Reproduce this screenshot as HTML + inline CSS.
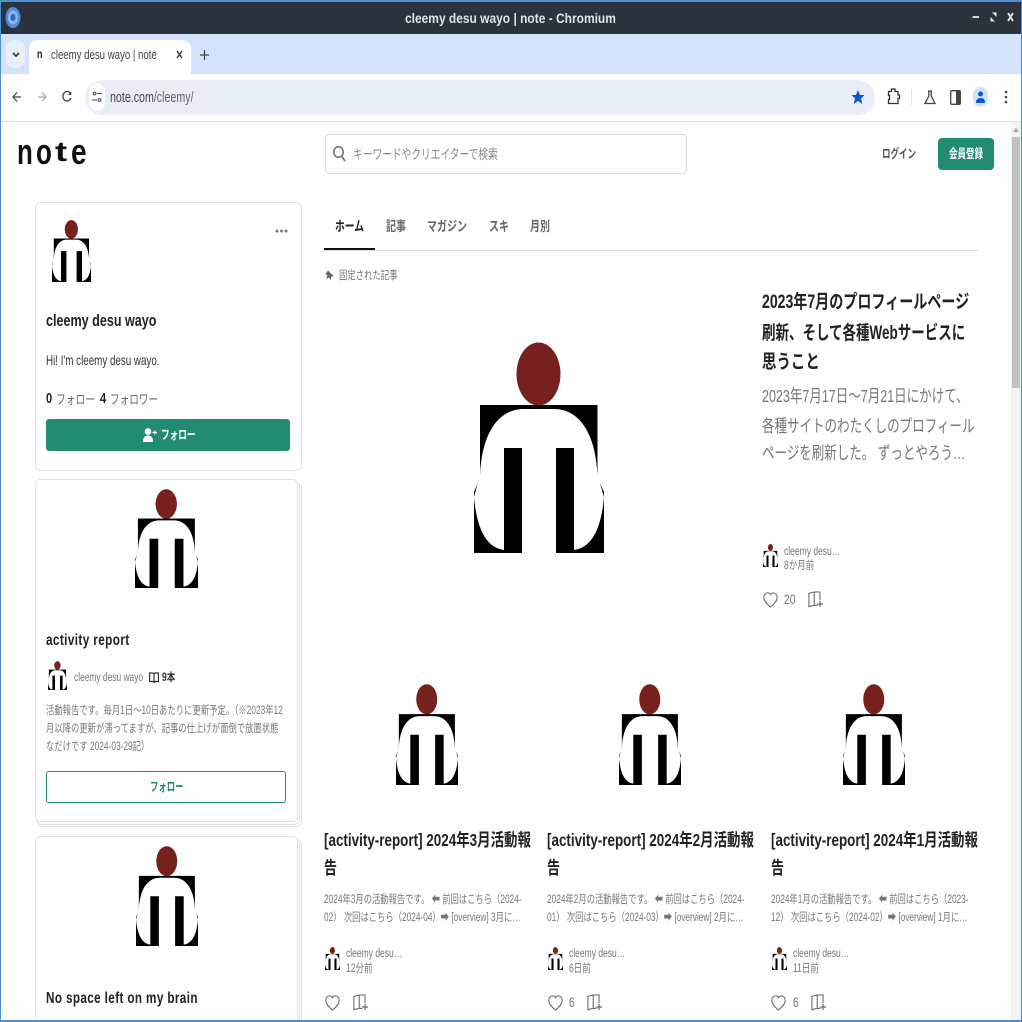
<!DOCTYPE html>
<html lang="ja"><head><meta charset="utf-8"><title>cleemy desu wayo | note - Chromium</title>
<style>
*{box-sizing:border-box}
html,body{margin:0;padding:0;width:1022px;height:1022px;overflow:hidden;background:#fff}
body{position:relative;font-family:"Liberation Sans","Noto Sans CJK JP",sans-serif;color:#222}
.a{position:absolute}
.t{position:absolute;white-space:nowrap;transform-origin:0 0;transform:scaleX(.74);line-height:1}
.b{font-weight:700}
.g{color:#777}
svg{position:absolute;overflow:visible}
.card{position:absolute;background:#fff;border:1px solid #e2e2e2;border-radius:6px}
</style></head><body>
<svg width="0" height="0" style="position:absolute"><defs>
<symbol id="m" viewBox="0 0 130 211" preserveAspectRatio="none">
<ellipse cx="64.5" cy="32" rx="22" ry="31.5" fill="#76211e"/>
<path d="M6 63H123.5V136L130 150V211H0V150L6 136Z" fill="#000"/>
<path d="M6 133C8 90 25 67 50 67H80C104.500 67 121.500 90 123.500 133L130 155C127 190 116 206 100 208V106H82V211H48V106H30V208C14 206 3 190 0 155Z" fill="#fff"/>
</symbol>
<symbol id="h" viewBox="0 0 18 20"><path d="M9 18.500C3 13.500 1 10.500 1 7C1 3.500 3.200 1.500 5.600 1.500C7 1.500 8.300 2.300 9 3.800C9.700 2.300 11 1.500 12.400 1.500C14.800 1.500 17 3.500 17 7C17 10.500 15 13.500 9 18.500Z" fill="none" stroke="#666" stroke-width="1.200"/></symbol>
<symbol id="k" viewBox="0 0 18 20"><path d="M1 2.500L7 1V16L1 17.500ZM7 1H13.500V10M7 16H11" fill="none" stroke="#666" stroke-width="1.200"/><path d="M13.500 11V18M10.500 14.500H17" fill="none" stroke="#666" stroke-width="1.300"/></symbol>
</defs></svg>

<!-- title bar -->
<div class="a" style="left:0;top:0;width:1022px;height:34px;background:#2c323e"></div>
<div class="a" style="left:0;top:0;width:1022px;height:2px;background:#4a90d9"></div>
<div class="t b" style="left:405px;top:11px;font-size:14px;color:#dfe2e8;transform:scaleX(.855)">cleemy desu wayo | note - Chromium</div>
<svg style="left:5px;top:7px" width="16" height="21" viewBox="0 0 16 21"><ellipse cx="8" cy="10.500" rx="7.500" ry="10.500" fill="#4d8ae0"/><ellipse cx="8" cy="10.500" rx="5" ry="7" fill="#8fb6ec"/><ellipse cx="8" cy="10.500" rx="2.600" ry="3.600" fill="#2a66c4"/></svg>
<svg style="left:970px;top:10px" width="46" height="14" viewBox="0 0 46 14" fill="none" stroke="#e6e6e6"><path d="M2.500 7H9" stroke-width="1.800"/><path d="M20.500 7V11.500H25Z" fill="#e6e6e6" stroke="none"/><path d="M26.500 2.500V7L22 2.500Z" fill="#e6e6e6" stroke="none"/><path d="M38 3L43 11M43 3L38 11" stroke-width="1.800"/></svg>

<!-- tab strip -->
<div class="a" style="left:0;top:34px;width:1022px;height:40px;background:#d3e3fd"></div>
<div class="a" style="left:6px;top:40px;width:19px;height:28px;background:#e9f0fb;border-radius:8px"></div>
<svg style="left:12px;top:52px" width="8" height="6" viewBox="0 0 8 6"><path d="M1 1L4 4L7 1" fill="none" stroke="#333" stroke-width="1.600"/></svg>
<div class="a" style="left:29px;top:40px;width:162px;height:36px;background:#fff;border-radius:9px 9px 0 0"></div>
<div class="t b" style="left:37px;top:48px;font-size:12px;color:#222">n</div>
<div class="t" style="left:51px;top:49px;font-size:12.500px;color:#444;transform:scaleX(.77)">cleemy desu wayo | note</div>
<svg style="left:176px;top:50px" width="7" height="9" viewBox="0 0 7 9"><path d="M1 1L6 8M6 1L1 8" stroke="#333" stroke-width="1.400"/></svg>
<svg style="left:200px;top:50px" width="9" height="10" viewBox="0 0 9 10"><path d="M4.500 0V10M0 5H9" stroke="#444" stroke-width="1.200"/></svg>

<!-- toolbar -->
<div class="a" style="left:0;top:74px;width:1022px;height:48px;background:#fff;border-bottom:1px solid #dedede;border-radius:8px 8px 0 0"></div>
<svg style="left:12px;top:91px" width="10" height="12" viewBox="0 0 10 12"><path d="M9 6H1M5 1.500L1 6L5 10.500" fill="none" stroke="#444" stroke-width="1.300"/></svg>
<svg style="left:37px;top:91px" width="10" height="12" viewBox="0 0 10 12"><path d="M1 6H9M5 1.500L9 6L5 10.500" fill="none" stroke="#aaa" stroke-width="1.300"/></svg>
<svg style="left:62px;top:90px" width="10" height="13" viewBox="0 0 10 13"><path d="M8.800 4A4.200 4.800 0 1 0 9 8" fill="none" stroke="#444" stroke-width="1.300"/><path d="M9.300 1.500V5H5.800Z" fill="#444"/></svg>
<div class="a" style="left:85px;top:80px;width:790px;height:35px;background:#e9eef6;border-radius:18px"></div>
<div class="a" style="left:89px;top:83px;width:16px;height:28px;background:#fff;border-radius:8px"></div>
<svg style="left:92px;top:91px" width="10" height="12" viewBox="0 0 10 12"><circle cx="2.500" cy="2.500" r="1.400" fill="none" stroke="#444"/><path d="M5 2.500H10M0 9H5" stroke="#444"/><circle cx="7.500" cy="9" r="1.400" fill="none" stroke="#444"/></svg>
<div class="t" style="left:110px;top:91px;font-size:14.500px;color:#444;transform:scaleX(.735)">note.com<span style="color:#666">/cleemy/</span></div>
<svg style="left:851px;top:89px" width="14" height="16" viewBox="0 0 14 16"><path d="M7 1L9 6H13.500L10 9.500L11.300 15L7 12L2.700 15L4 9.500L.5 6H5Z" fill="#0b57d0"/></svg>
<svg style="left:887px;top:88px" width="13" height="17" viewBox="0 0 13 17"><path d="M2 3.500H4.500V1H8V3.500H11V7H12.500V10.500H11V15.500H1.500V11.500H2.500V7.500H1.500V3.500Z" fill="none" stroke="#333" stroke-width="1.300"/></svg>
<div class="a" style="left:911px;top:89px;width:1px;height:16px;background:#d3e3fd"></div>
<svg style="left:924px;top:90px" width="12" height="15" viewBox="0 0 12 15"><path d="M4 1H8M4.800 1V6L1 13.500H11L7.200 6V1" fill="none" stroke="#444" stroke-width="1.300"/></svg>
<svg style="left:950px;top:90px" width="11" height="15" viewBox="0 0 11 15"><rect x=".7" y=".7" width="9.600" height="13.600" rx="1" fill="none" stroke="#444" stroke-width="1.300"/><rect x="6" y="1" width="4" height="13" fill="#444"/></svg>
<div class="a" style="left:973px;top:87px;width:15px;height:20px;background:#d3e3fd;border-radius:8px"></div>
<svg style="left:976px;top:91px" width="9" height="12" viewBox="0 0 9 12"><circle cx="4.500" cy="3" r="2.500" fill="#0b57d0"/><path d="M0 12C0 8 2 7 4.500 7S9 8 9 12Z" fill="#0b57d0"/></svg>
<svg style="left:1004px;top:90px" width="4" height="14" viewBox="0 0 4 14" fill="#444"><circle cx="2" cy="2" r="1.300"/><circle cx="2" cy="7" r="1.300"/><circle cx="2" cy="12" r="1.300"/></svg>

<!-- scrollbar -->
<div class="a" style="left:1011px;top:122px;width:10px;height:898px;background:#f3f3f3"></div>
<div class="a" style="left:1012px;top:137px;width:8px;height:251px;background:#c1c1c1"></div>
<svg style="left:1012px;top:127px" width="8" height="6" viewBox="0 0 8 6"><path d="M4 1L7 5H1Z" fill="#a3a3a3"/></svg>

<!-- header -->
<div class="t b" style="left:17px;top:134px;font-size:36px;color:#111;transform:scaleX(.72)">n</div>
<div class="t b" style="left:36px;top:134px;font-size:36px;color:#111;transform:scaleX(.72)">o</div>
<div class="t b" style="left:55px;top:138px;font-size:28px;color:#111;transform:scaleX(1.3)">t</div>
<div class="t b" style="left:71px;top:134px;font-size:36px;color:#111;transform:scaleX(.78)">e</div>
<div class="a" style="left:325px;top:134px;width:362px;height:40px;border:1px solid #ddd;border-radius:4px"></div>
<svg style="left:333px;top:146px" width="13" height="16" viewBox="0 0 13 16"><ellipse cx="5.500" cy="6" rx="4.700" ry="5.300" fill="none" stroke="#777" stroke-width="1.600"/><path d="M8.500 10L12 15" stroke="#777" stroke-width="1.700"/></svg>
<div class="t g" style="left:353px;top:148px;font-size:13.500px;color:#888;transform:scaleX(.72)">キーワードやクリエイターで検索</div>
<div class="t b" style="left:882px;top:148px;font-size:12.500px;color:#555;transform:scaleX(.68)">ログイン</div>
<div class="a" style="left:938px;top:138px;width:56px;height:32px;background:#228c73;border-radius:4px"></div>
<div class="t b" style="left:949px;top:148px;font-size:12.500px;color:#fff;transform:scaleX(.68)">会員登録</div>

<!-- profile card -->
<div class="card" style="left:35px;top:202px;width:267px;height:269px"></div>
<svg style="left:52px;top:219.500px" width="39" height="62"><use href="#m" width="39" height="62"/></svg>
<svg style="left:275px;top:229px" width="13" height="4" fill="#777"><circle cx="2" cy="2" r="1.500"/><circle cx="6.500" cy="2" r="1.500"/><circle cx="11" cy="2" r="1.500"/></svg>
<div class="t b" style="left:46px;top:312px;font-size:17px;color:#222;transform:scaleX(.74)">cleemy desu wayo</div>
<div class="t" style="left:46px;top:353px;font-size:14px;color:#333;transform:scaleX(.7)">Hi! I'm cleemy desu wayo.</div>
<div class="t b" style="left:46px;top:391px;font-size:15px;color:#222">0</div>
<div class="t" style="left:56px;top:393px;font-size:13px;color:#666;transform:scaleX(.75)">フォロー</div>
<div class="t b" style="left:100px;top:391px;font-size:15px;color:#222">4</div>
<div class="t" style="left:110px;top:393px;font-size:13px;color:#666">フォロワー</div>
<div class="a" style="left:46px;top:419px;width:244px;height:32px;background:#228c73;border-radius:3px"></div>
<svg style="left:143px;top:428px" width="14" height="14" viewBox="0 0 14 14" fill="#fff"><circle cx="5" cy="3.500" r="3.300"/><path d="M0 14C0 9 2 7.500 5 7.500S10 9 10 14Z"/><path d="M9.500 4.500H14M11.800 2.500V6.500" stroke="#fff" stroke-width="1.200"/></svg>
<div class="t b" style="left:161px;top:429px;font-size:12.500px;color:#fff;transform:scaleX(.69)">フォロー</div>

<!-- magazine card 1 -->
<div class="card" style="left:38px;top:483px;width:264px;height:344px;border-radius:5px"></div>
<div class="card" style="left:36px;top:481px;width:264px;height:344px;border-radius:5px"></div>
<div class="card" style="left:35px;top:479px;width:263px;height:343px;border-radius:5px"></div>
<svg style="left:135px;top:489px" width="63" height="99"><use href="#m" width="63" height="99"/></svg>
<div class="t b" style="left:46px;top:633px;font-size:15.500px;color:#222;letter-spacing:.5px;transform:scaleX(.76)">activity report</div>
<svg style="left:48px;top:661px" width="19" height="29"><use href="#m" width="19" height="29"/></svg>
<div class="t" style="left:74px;top:673px;font-size:11.500px;color:#777;transform:scaleX(.73)">cleemy desu wayo</div>
<svg style="left:149px;top:672px" width="10" height="11" viewBox="0 0 10 11"><path d="M.6 1H4L5 2L6 1H9.400V9.500H6L5 10.500L4 9.500H.6ZM5 2V10.500" fill="none" stroke="#333" stroke-width="1.200"/></svg>
<div class="t b" style="left:162px;top:673px;font-size:11.500px;color:#333">9本</div>
<div class="t" style="left:46px;top:706px;font-size:11.500px;color:#777;transform:scaleX(.725)">活動報告です。毎月1日～10日あたりに更新予定。（※2023年12</div>
<div class="t" style="left:46px;top:724px;font-size:11.500px;color:#777;transform:scaleX(.725)">月以降の更新が滞ってますが、記事の仕上げが面倒で放置状態</div>
<div class="t" style="left:46px;top:742px;font-size:11.500px;color:#777;transform:scaleX(.725)">なだけです 2024-03-29記）</div>
<div class="a" style="left:46px;top:771px;width:240px;height:32px;border:1px solid #228c73;border-radius:3px"></div>
<div class="t b" style="left:150px;top:781px;font-size:12.500px;color:#228c73;transform:scaleX(.67)">フォロー</div>

<!-- magazine card 2 -->
<div class="card" style="left:39px;top:840px;width:263px;height:200px;border-radius:5px"></div>
<div class="card" style="left:37px;top:838px;width:263px;height:200px;border-radius:5px"></div>
<div class="card" style="left:35px;top:836px;width:263px;height:200px;border-radius:5px"></div>
<svg style="left:136px;top:846px" width="62" height="100"><use href="#m" width="62" height="100"/></svg>
<div class="t b" style="left:46px;top:991px;font-size:15.500px;color:#222;letter-spacing:.5px;transform:scaleX(.755)">No space left on my brain</div>

<!-- tabs -->
<div class="t b" style="left:335px;top:220px;font-size:13.500px;color:#222;transform:scaleX(.725)">ホーム</div>
<div class="t b" style="left:386px;top:220px;font-size:13.500px;color:#666">記事</div>
<div class="t b" style="left:427px;top:220px;font-size:13.500px;color:#666">マガジン</div>
<div class="t b" style="left:489px;top:220px;font-size:13.500px;color:#666">スキ</div>
<div class="t b" style="left:530px;top:220px;font-size:13.500px;color:#666">月別</div>
<div class="a" style="left:324px;top:250px;width:654px;height:1px;background:#ddd"></div>
<div class="a" style="left:324px;top:248px;width:51px;height:2px;background:#111"></div>
<svg style="left:325px;top:270px" width="9" height="11" viewBox="0 0 9 11"><path d="M3 .5L8.500 6L6 7V10.500L4 7.500L1 9L2.500 5.500L.5 4Z" fill="#666"/></svg>
<div class="t" style="left:339px;top:271px;font-size:11.500px;color:#777;transform:scaleX(.727)">固定された記事</div>

<!-- pinned -->
<svg style="left:474px;top:342px" width="130" height="211"><use href="#m" width="130" height="211"/></svg>
<div class="t b" style="left:762px;top:293px;font-size:19px;color:#222">2023年7月のプロフィールページ</div>
<div class="t b" style="left:762px;top:324px;font-size:19px;color:#222;transform:scaleX(.71)">刷新、そして各種Webサービスに</div>
<div class="t b" style="left:762px;top:353px;font-size:19px;color:#222;transform:scaleX(.76)">思うこと</div>
<div class="t" style="left:762px;top:388px;font-size:17.500px;color:#777;transform:scaleX(.715)">2023年7月17日～7月21日にかけて、</div>
<div class="t" style="left:762px;top:418px;font-size:17.500px;color:#777;transform:scaleX(.715)">各種サイトのわたくしのプロフィール</div>
<div class="t" style="left:762px;top:445px;font-size:17.500px;color:#777;transform:scaleX(.715)">ページを刷新した。 ずっとやろう…</div>
<svg style="left:763px;top:544px" width="15" height="23"><use href="#m" width="15" height="23"/></svg>
<div class="t" style="left:784px;top:547px;font-size:11.500px;color:#777">cleemy desu…</div>
<div class="t" style="left:784px;top:561px;font-size:11.500px;color:#777">8か月前</div>
<svg style="left:763px;top:590px" width="15" height="20"><use href="#h" width="15" height="20"/></svg>
<div class="t" style="left:784px;top:592px;font-size:14px;color:#777">20</div>
<svg style="left:808px;top:590px" width="16" height="20"><use href="#k" width="16" height="20"/></svg>

<!-- cards row -->
<svg style="left:396px;top:684px" width="62" height="101"><use href="#m" width="62" height="101"/></svg>
<svg style="left:619px;top:684px" width="62" height="101"><use href="#m" width="62" height="101"/></svg>
<svg style="left:843px;top:684px" width="62" height="101"><use href="#m" width="62" height="101"/></svg>

<div class="t b" style="left:324px;top:832px;font-size:17.500px;color:#222;transform:scaleX(.768)">[activity-report] 2024年3月活動報</div>
<div class="t b" style="left:324px;top:860px;font-size:17.500px;color:#222">告</div>
<div class="t" style="left:324px;top:895px;font-size:11.500px;color:#777;transform:scaleX(.722)">2024年3月の活動報告です。 ⬅ 前回はこちら（2024-</div>
<div class="t" style="left:324px;top:913px;font-size:11.500px;color:#777;transform:scaleX(.722)">02） 次回はこちら（2024-04）➡ [overview] 3月に…</div>
<svg style="left:325px;top:947px" width="15" height="23"><use href="#m" width="15" height="23"/></svg>
<div class="t" style="left:346px;top:949px;font-size:11.500px;color:#777">cleemy desu…</div>
<div class="t" style="left:346px;top:964px;font-size:11.500px;color:#777">12分前</div>
<svg style="left:325px;top:993px" width="15" height="20"><use href="#h" width="15" height="20"/></svg>
<svg style="left:353px;top:993px" width="16" height="20"><use href="#k" width="16" height="20"/></svg>

<div class="t b" style="left:547px;top:832px;font-size:17.500px;color:#222;transform:scaleX(.768)">[activity-report] 2024年2月活動報</div>
<div class="t b" style="left:547px;top:860px;font-size:17.500px;color:#222">告</div>
<div class="t" style="left:547px;top:895px;font-size:11.500px;color:#777;transform:scaleX(.722)">2024年2月の活動報告です。 ⬅ 前回はこちら（2024-</div>
<div class="t" style="left:547px;top:913px;font-size:11.500px;color:#777;transform:scaleX(.722)">01） 次回はこちら（2024-03）➡ [overview] 2月に…</div>
<svg style="left:548px;top:947px" width="15" height="23"><use href="#m" width="15" height="23"/></svg>
<div class="t" style="left:569px;top:949px;font-size:11.500px;color:#777">cleemy desu…</div>
<div class="t" style="left:569px;top:964px;font-size:11.500px;color:#777">6日前</div>
<svg style="left:548px;top:993px" width="15" height="20"><use href="#h" width="15" height="20"/></svg>
<div class="t" style="left:569px;top:995px;font-size:14px;color:#777">6</div>
<svg style="left:587px;top:993px" width="16" height="20"><use href="#k" width="16" height="20"/></svg>

<div class="t b" style="left:771px;top:832px;font-size:17.500px;color:#222;transform:scaleX(.768)">[activity-report] 2024年1月活動報</div>
<div class="t b" style="left:771px;top:860px;font-size:17.500px;color:#222">告</div>
<div class="t" style="left:771px;top:895px;font-size:11.500px;color:#777;transform:scaleX(.722)">2024年1月の活動報告です。 ⬅ 前回はこちら（2023-</div>
<div class="t" style="left:771px;top:913px;font-size:11.500px;color:#777;transform:scaleX(.722)">12） 次回はこちら（2024-02）➡ [overview] 1月に…</div>
<svg style="left:772px;top:947px" width="15" height="23"><use href="#m" width="15" height="23"/></svg>
<div class="t" style="left:793px;top:949px;font-size:11.500px;color:#777">cleemy desu…</div>
<div class="t" style="left:793px;top:964px;font-size:11.500px;color:#777">11日前</div>
<svg style="left:771px;top:993px" width="15" height="20"><use href="#h" width="15" height="20"/></svg>
<div class="t" style="left:793px;top:995px;font-size:14px;color:#777">6</div>
<svg style="left:811px;top:993px" width="16" height="20"><use href="#k" width="16" height="20"/></svg>

<!-- window border -->
<div class="a" style="left:0;top:0;width:1px;height:1022px;background:#4a90d9"></div>
<div class="a" style="left:1021px;top:0;width:1px;height:1022px;background:#4a90d9"></div>
<div class="a" style="left:0;top:1020px;width:1022px;height:2px;background:#4a90d9"></div>
</body></html>
